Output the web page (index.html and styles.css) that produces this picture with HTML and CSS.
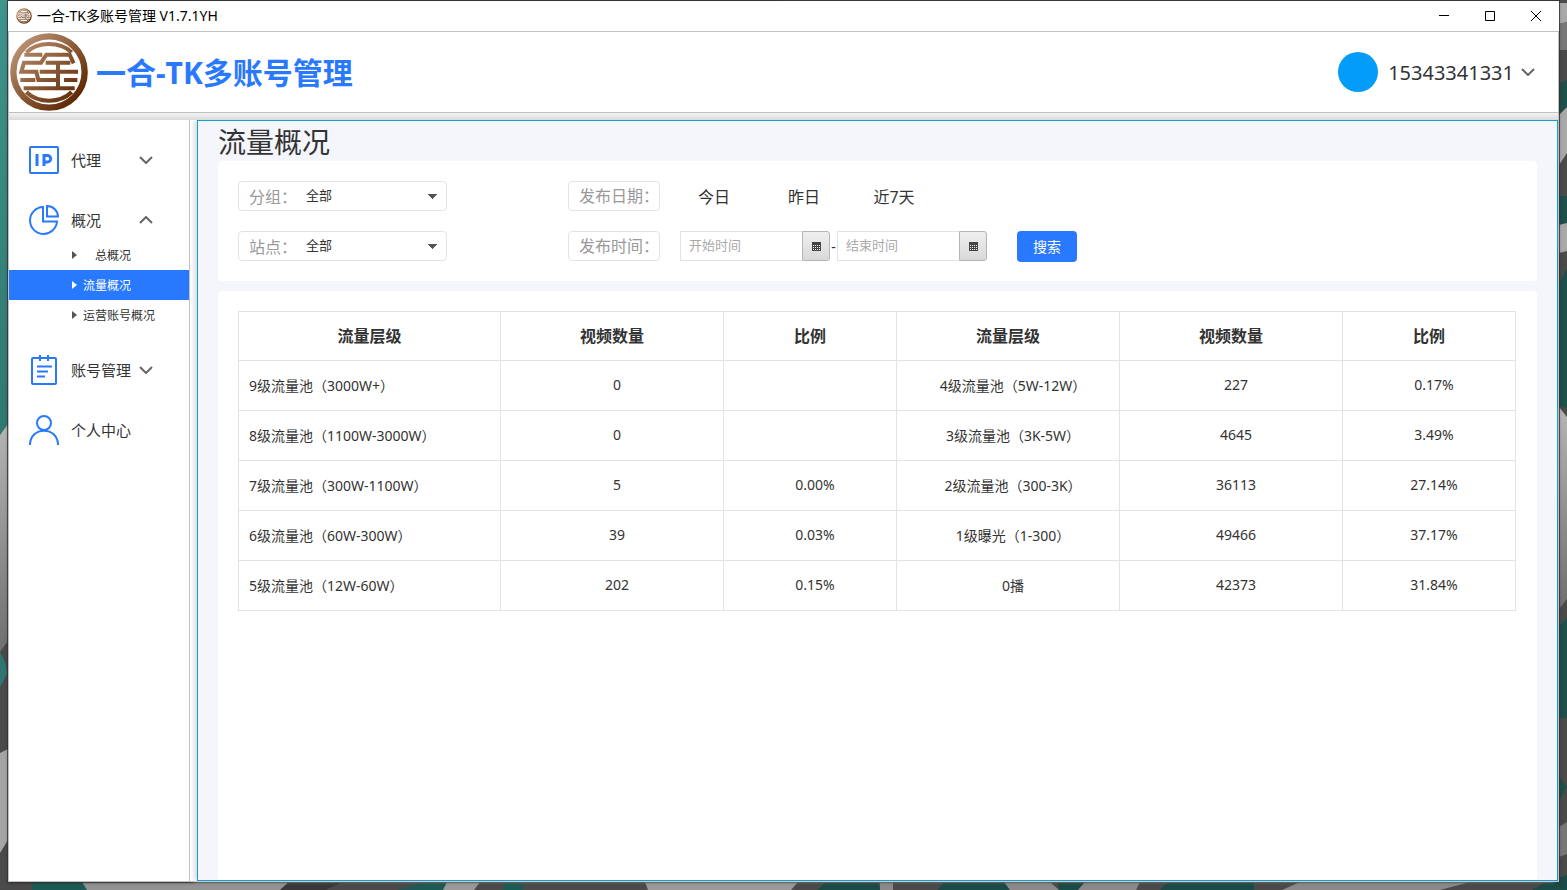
FILE: index.html
```html
<!DOCTYPE html>
<html lang="zh-CN">
<head>
  <meta charset="UTF-8" />
  <meta name="viewport" content="width=device-width, initial-scale=1.0"/>
  <title>一合-TK多账号管理 V1.7.1YH</title>
  <link rel="stylesheet" href="styles.css">
</head>
<body>
  <!-- desktop wallpaper -->
  <svg class="wallpaper" viewBox="0 0 1567 890" preserveAspectRatio="none" aria-hidden="true">
    <defs>
      <linearGradient id="teal" x1="0" y1="0" x2="0" y2="1">
        <stop offset="0" stop-color="#3f948b"/>
        <stop offset="1" stop-color="#2f786f"/>
      </linearGradient>
      <linearGradient id="grey" x1="0" y1="0" x2="0" y2="1">
        <stop offset="0" stop-color="#b5b5b5"/>
        <stop offset="1" stop-color="#6f6f6f"/>
      </linearGradient>
    </defs>
    <rect width="1567" height="890" fill="#4a4a4a"/>
    <rect width="780" height="1" fill="#2a4a48"/>
    <path fill="url(#teal)" d="M0 0H8V424L0 435z"/>
    <path fill="url(#grey)" d="M0 435L8 424V641L0 652z"/>
    <path fill="#2d776f" d="M0 652Q7 664 7 674L0 687z"/>
    <path fill="#a5a5a5" d="M0 753L8 749V840L0 853z"/>
    <path fill="#1f4f4a" d="M1559 84L1567 80V107L1559 115zM1559 196H1567V223L1559 225zM1559 284L1567 268V408L1559 406zM1559 626L1567 618V718H1559zM1559 777L1567 787 1559 800z"/>
    <path fill="#a8a8a8" d="M1559 3H1567V22L1559 24zM1559 115L1567 107V153L1559 165zM1559 225L1567 223V251L1559 253z"/>
    <path fill="#777" d="M1559 24L1567 22V50H1559z"/>
    <path fill="url(#grey)" d="M1559 407L1567 417V599L1559 609z"/>
    <path fill="#777" d="M1559 827L1567 822V854L1559 857z"/>
    <path fill="#1c5a53" d="M32 882H82L87 890H32z"/>
    <path fill="#939393" d="M82 882H289L280 890H87z"/>
    <path fill="#383838" d="M289 882H343L325 890H280z"/>
    <path fill="#1c5a53" d="M425 882H447L443 890H397zM505 882H523V890H503z"/>
    <path fill="#9a9a9a" d="M447 882H480L474 890H443zM645 882H798L791 890H648z"/>
    <path fill="#1b4b46" d="M825 882H878L880 890H818zM944 882H1005L1010 890H938zM1058 882H1085L1078 890H1059zM1168 882H1254V890H1160zM1546 882L1567 875V890H1532z"/>
    <path fill="#8a8a8a" d="M880 882H893V890H880zM1004 882H1050L1059 890H1010zM1085 882H1140L1136 890H1078zM1300 882H1470L1440 890H1282z"/>
  </svg>

  <div class="window">
    <div class="titlebar">
      <svg class="titlebar-icon" viewBox="0 0 240 240"><use href="#logo"/></svg>
      <span class="titlebar-text">一合-TK多账号管理 V1.7.1YH</span>
      <button class="win-btn" aria-label="最小化"><svg width="10" height="10" viewBox="0 0 10 10"><path d="M0 4.500H10"/></svg></button>
      <button class="win-btn" aria-label="最大化"><svg width="10" height="10" viewBox="0 0 10 10"><path d="M.5 .5H9.5V9.5H.5z"/></svg></button>
      <button class="win-btn" aria-label="关闭"><svg width="10" height="10" viewBox="0 0 10 10"><path d="M0 0L10 10M10 0L0 10"/></svg></button>
    </div>

    <div class="frame">
      <header class="header">
        <svg class="logo" viewBox="0 0 240 240">
          <defs>
            <linearGradient id="bronze" gradientUnits="userSpaceOnUse" x1="30" y1="30" x2="205" y2="210">
              <stop offset="0" stop-color="#bd9273"/>
              <stop offset=".5" stop-color="#8a5a36"/>
              <stop offset="1" stop-color="#5c2500"/>
            </linearGradient>
            <g id="logo" fill="none" stroke="url(#bronze)" stroke-width="12">
              <circle cx="120" cy="120" r="107" stroke-width="19"/>
              <path d="M52 61Q78 36 120 36T188 61M52 180Q78 206 120 206T188 180"/>
              <path d="M46 68H100M40 92H96L112 68H182L194 94M46 88L37 119H82L88 144H142M110 92H184M92 119H207M147 92V169M34 144H79M165 144H205M44 169H197"/>
            </g>
          </defs>
          <use href="#logo"/>
        </svg>
        <h1 class="brand">一合-TK多账号管理</h1>
        <button class="account">
          <span class="avatar"></span>
          15343341331
          <svg class="chevron" viewBox="0 0 14 8"><path d="M1 1L7 7L13 1"/></svg>
        </button>
      </header>

      <div class="main">
        <nav class="sidebar">
          <button class="menu">
            <svg class="menu-icon" viewBox="0 0 30 30"><rect x="1" y="2" width="28" height="26" rx="1"/><path stroke-width="3" d="M8 9V21M15 21V10.500H18.500A3.200 3.200 0 0 1 18.500 17H15"/></svg>
            <span>代理</span>
            <svg class="chevron" viewBox="0 0 14 8"><path d="M1 1L7 7L13 1"/></svg>
          </button>
          <div class="group">
            <button class="menu">
              <svg class="menu-icon" viewBox="0 0 30 30"><path d="M14 2A13.500 13.500 0 1 0 28 16.500H14z"/><path d="M18 1V11.500H29A11 11 0 0 0 18 1z"/></svg>
              <span>概况</span>
              <svg class="chevron" viewBox="0 0 14 8"><path d="M1 7L7 1L13 7"/></svg>
            </button>
            <a class="submenu submenu-first" href="#">总概况</a>
            <a class="submenu active" href="#">流量概况</a>
            <a class="submenu" href="#">运营账号概况</a>
          </div>
          <button class="menu">
            <svg class="menu-icon" viewBox="0 0 30 30"><rect x="3" y="3" width="24" height="26" rx="1"/><path d="M11 0V6M19 0V6M8 11.500H23M8 16.500H19M8 21.500H16"/></svg>
            <span>账号管理</span>
            <svg class="chevron" viewBox="0 0 14 8"><path d="M1 1L7 7L13 1"/></svg>
          </button>
          <button class="menu">
            <svg class="menu-icon" viewBox="0 0 30 30"><circle cx="15" cy="8" r="7"/><path d="M1 30C1 11 29 11 29 30"/></svg>
            <span>个人中心</span>
          </button>
        </nav>

        <main class="content">
          <h2 class="page-title">流量概况</h2>

          <form class="card filters">
            <div class="select-box">
              <label for="group">分组：</label>
              <select id="group"><option>全部</option></select>
            </div>
            <div class="filter-row">
              <span class="tag">发布日期：</span>
              <button type="button" class="day">今日</button>
              <button type="button" class="day">昨日</button>
              <button type="button" class="day">近7天</button>
            </div>
            <div class="select-box">
              <label for="site">站点：</label>
              <select id="site"><option>全部</option></select>
            </div>
            <div class="filter-row">
              <label class="tag" for="start">发布时间：</label>
              <div class="picker">
                <input id="start" type="text" placeholder="开始时间">
                <button type="button" aria-label="选择开始时间"><svg width="9" height="9" viewBox="0 0 9 9"><path fill="#444" d="M0 0H9V9H0z"/><path stroke="#eee" stroke-dasharray="1 1" d="M1 3.500H8M1 5.500H8M1 7.500H8"/></svg></button>
              </div>
              <span class="dash">-</span>
              <div class="picker">
                <input id="end" type="text" placeholder="结束时间" aria-label="结束时间">
                <button type="button" aria-label="选择结束时间"><svg width="9" height="9" viewBox="0 0 9 9"><path fill="#444" d="M0 0H9V9H0z"/><path stroke="#eee" stroke-dasharray="1 1" d="M1 3.500H8M1 5.500H8M1 7.500H8"/></svg></button>
              </div>
              <button type="button" class="search">搜索</button>
            </div>
          </form>

          <section class="card results">
            <table>
              <colgroup>
                <col class="col-level-wide"><col class="col-count"><col class="col-rate">
                <col class="col-count"><col class="col-count"><col class="col-rate">
              </colgroup>
              <thead>
                <tr><th>流量层级</th><th>视频数量</th><th>比例</th><th>流量层级</th><th>视频数量</th><th>比例</th></tr>
              </thead>
              <tbody>
                <tr><td>9级流量池（3000W+）</td><td>0</td><td></td><td>4级流量池（5W-12W）</td><td>227</td><td>0.17%</td></tr>
                <tr><td>8级流量池（1100W-3000W）</td><td>0</td><td></td><td>3级流量池（3K-5W）</td><td>4645</td><td>3.49%</td></tr>
                <tr><td>7级流量池（300W-1100W）</td><td>5</td><td>0.00%</td><td>2级流量池（300-3K）</td><td>36113</td><td>27.14%</td></tr>
                <tr><td>6级流量池（60W-300W）</td><td>39</td><td>0.03%</td><td>1级曝光（1-300）</td><td>49466</td><td>37.17%</td></tr>
                <tr><td>5级流量池（12W-60W）</td><td>202</td><td>0.15%</td><td>0播</td><td>42373</td><td>31.84%</td></tr>
              </tbody>
            </table>
          </section>
        </main>
      </div>
    </div>
  </div>
</body>
</html>
```
FILE: styles.css
```css
* {
  box-sizing: border-box;
}

body {
  margin: 0;
  height: 100vh;
  padding: 1px 8px 8px;
  font-family: "Noto Sans", "Noto Sans CJK SC", sans-serif;
  font-size: 14px;
  color: #333;
}

button, input, select {
  font-family: inherit;
  color: inherit;
  margin: 0;
}

button {
  background: none;
  border: none;
  padding: 0;
  cursor: pointer;
}

.wallpaper {
  position: absolute;
  inset: 0;
  width: 100%;
  height: 100%;
  z-index: -1;
}

.window {
  display: flex;
  flex-direction: column;
  height: 100%;
  background: #fff;
  box-shadow: 0 0 0 1px #333c, 0 1px 3px rgba(0,0,0,0.4);
}

/* title bar */
.titlebar {
  display: flex;
  align-items: center;
  height: 30px;
  padding-left: 8px;
  color: #000;
}

.titlebar-icon {
  width: 16px;
  height: 16px;
  margin-right: 5px;
}

.titlebar-text {
  flex: 1;
  padding-bottom: 2px;
}

.win-btn {
  width: 46px;
  height: 30px;
  padding-bottom: 1px;
}

.win-btn svg {
  display: block;
  margin: auto;
  fill: none;
  stroke: #000;
}

.frame {
  flex: 1;
  display: flex;
  flex-direction: column;
  min-height: 0;
  border: 1px solid #c0c0c0;
}

/* header */
.header {
  display: flex;
  align-items: center;
  height: 80px;
  padding-right: 23px;
}

.logo {
  width: 80px;
  height: 80px;
}

.brand {
  flex: 1;
  margin: 0 0 0 7px;
  padding-bottom: 2px;
  font-size: 30px;
  color: #2979ff;
}

.account {
  display: flex;
  align-items: center;
  font-size: 20px;
}

.avatar {
  width: 40px;
  height: 40px;
  margin-right: 10px;
  border-radius: 50%;
  background: #039cf8;
}

.account .chevron { margin-left: 7px; }

.chevron {
  width: 14px;
  height: 8px;
  fill: none;
  stroke: #666;
  stroke-width: 2;
}

.main {
  flex: 1;
  display: flex;
  min-height: 0;
  padding-top: 7px;
  border-top: 1px solid #c0c0c0;
  background: linear-gradient(#f3f3f3, #dadada) top / 100% 7px no-repeat;
}

/* sidebar */
.sidebar {
  display: flex;
  flex-direction: column;
  gap: 20px;
  width: 181px;
  padding-top: 20px;
  border-right: 1px solid #c0c0c0;
  background: #fff;
}

.menu {
  display: flex;
  align-items: center;
  width: 100%;
  height: 40px;
  padding: 0 36px 0 20px;
  font-size: 15px;
}

.menu span { padding-bottom: 2px; }

.menu-icon {
  width: 30px;
  height: 30px;
  margin-right: 12px;
  fill: none;
  stroke: #2979ff;
  stroke-width: 2;
}

.menu .chevron { margin-left: auto; }

.submenu {
  display: flex;
  align-items: center;
  height: 30px;
  padding-left: 63px;
  font-size: 12px;
  color: #333;
  text-decoration: none;
}

.submenu::before {
  content: "";
  margin-right: 6px;
  border-left: 5px solid #555;
  border-top: 4px solid transparent;
  border-bottom: 4px solid transparent;
}

.submenu-first::before { margin-right: 18px; }

.active {
  background: #2979ff;
  color: #fff;
}

.active::before { border-left-color: #fff; }

/* content */
.content {
  flex: 1;
  display: flex;
  flex-direction: column;
  margin-left: 7px;
  padding: 0 20px;
  border: 1px solid #109fd4;
  background: #f4f6fc;
  box-shadow: -3px 0 4px #ddd;
}

.page-title {
  margin: 0;
  padding-top: 2px;
  font-size: 28px;
  font-weight: normal;
  line-height: 38px;
}

.card {
  padding: 20px;
  border-radius: 4px;
  background: #fff;
}

.filters {
  display: grid;
  grid-template-columns: 209px 1fr;
  gap: 20px 121px;
  margin-bottom: 10px;
}

.select-box {
  display: flex;
  align-items: center;
  height: 30px;
  padding: 0 9px 0 10px;
  border: 1px solid #e3e3e3;
  border-radius: 4px;
}

.select-box label {
  font-size: 16px;
  color: #999;
}

.select-box select {
  flex: 1;
  appearance: none;
  margin-left: 9px;
  padding: 0 0 2px;
  border: none;
  font-size: 13px;
  background: conic-gradient(from -45deg at 50% 100%, #555 90deg, transparent 0) right / 9px 5px no-repeat;
}

.filter-row {
  display: flex;
  align-items: center;
  height: 30px;
}

.tag {
  width: 92px;
  height: 30px;
  padding-left: 10px;
  border: 1px solid #e3e3e3;
  border-radius: 4px;
  font-size: 16px;
  line-height: 28px;
  white-space: nowrap;
  color: #999;
}

.day {
  width: 90px;
  font-size: 16px;
}

.tag + .day { margin-left: 9px; }

.picker {
  display: flex;
  width: 150px;
  height: 30px;
}

.tag + .picker { margin-left: 20px; }

.picker input {
  width: 122px;
  padding: 0 8px 2px;
  border: 1px solid #e3e3e3;
  border-right: none;
  font-size: 13px;
}

.picker input::placeholder { color: #aaa; }

.picker button {
  display: flex;
  align-items: center;
  justify-content: center;
  width: 28px;
  border: 1px solid #b5b5b5;
  border-radius: 0 3px 3px 0;
  background: linear-gradient(#efefef, #d9d9d9);
}

.dash {
  width: 7px;
  text-align: center;
}

.search {
  width: 60px;
  height: 31px;
  margin-left: 30px;
  border-radius: 4px;
  background: #2979ff;
  color: #fff;
  font-size: 14px;
}

.results {
  flex: 1;
  padding-right: 21px;
}

table {
  width: 100%;
  table-layout: fixed;
  border-collapse: collapse;
}

.col-level-wide { width: 262px; }
.col-count { width: 223px; }
.col-rate { width: 173px; }

th, td {
  height: 50px;
  padding: 0 0 2px;
  border: 1px solid #e3e3e3;
  text-align: center;
}

th {
  height: 49px;
  font-size: 16px;
}

td { padding-left: 10px; }
td:first-child { text-align: left; }
```
